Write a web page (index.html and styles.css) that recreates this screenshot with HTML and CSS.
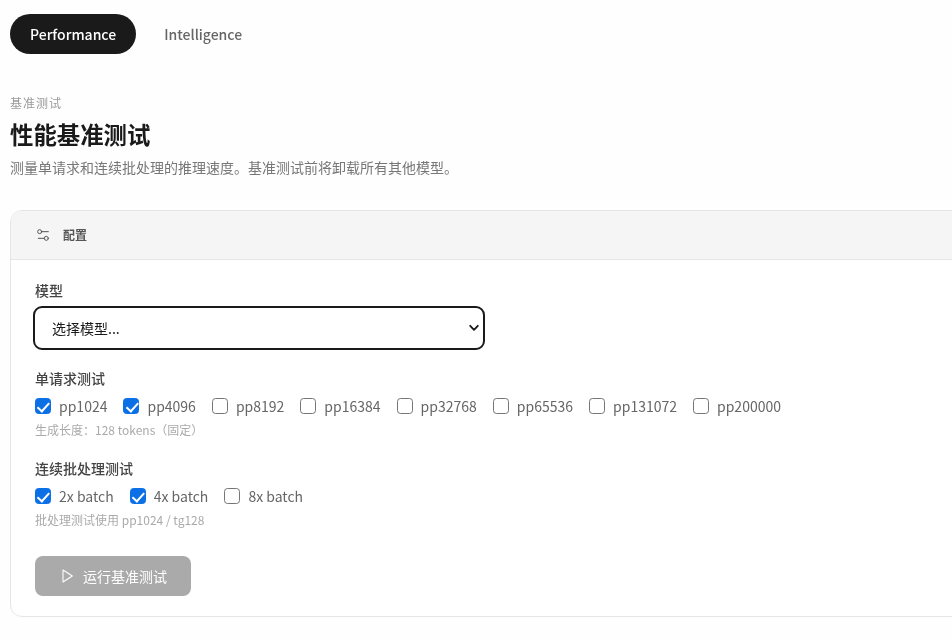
FILE: index.html
```html
<!DOCTYPE html>
<html lang="zh-CN">
<head>
<meta charset="utf-8">
<title>性能基准测试</title>
<link rel="stylesheet" href="styles.css">
</head>
<body>
<div class="page">
  <nav class="tabs">
    <button class="tab tab-active" type="button">Performance</button>
    <button class="tab" type="button">Intelligence</button>
  </nav>
  <header class="intro">
    <div class="eyebrow">基准测试</div>
    <h1 class="title">性能基准测试</h1>
    <p class="lead">测量单请求和连续批处理的推理速度。基准测试前将卸载所有其他模型。</p>
  </header>
  <section class="card">
    <div class="card-head">
      <svg class="head-icon" viewBox="0 0 24 24" fill="none" stroke="currentColor" stroke-width="1.5" stroke-linecap="round" stroke-linejoin="round">
        <path d="M20 7h-9"/>
        <path d="M14 17H5"/>
        <circle cx="17" cy="17" r="3"/>
        <circle cx="7" cy="7" r="3"/>
      </svg>
      <span>配置</span>
    </div>
    <div class="card-body">
      <div class="field field-model">
        <label class="label" for="model">模型</label>
        <div class="select-wrap">
          <select class="select" id="model">
            <option>选择模型...</option>
          </select>
          <svg class="select-arrow" viewBox="0 0 10 8" fill="none" stroke="currentColor" stroke-width="1.8" stroke-linecap="round" stroke-linejoin="round">
            <path d="M1.2 1.8 5 5.8 8.8 1.8"/>
          </svg>
        </div>
      </div>
      <div class="field field-single">
        <div class="label">单请求测试</div>
        <div class="checks">
          <label class="check"><input type="checkbox" checked><span>pp1024</span></label>
          <label class="check"><input type="checkbox" checked><span>pp4096</span></label>
          <label class="check"><input type="checkbox"><span>pp8192</span></label>
          <label class="check"><input type="checkbox"><span>pp16384</span></label>
          <label class="check"><input type="checkbox"><span>pp32768</span></label>
          <label class="check"><input type="checkbox"><span>pp65536</span></label>
          <label class="check"><input type="checkbox"><span>pp131072</span></label>
          <label class="check"><input type="checkbox"><span>pp200000</span></label>
        </div>
        <div class="hint">生成长度：128 tokens（固定）</div>
      </div>
      <div class="field field-batch">
        <div class="label">连续批处理测试</div>
        <div class="checks">
          <label class="check"><input type="checkbox" checked><span>2x batch</span></label>
          <label class="check"><input type="checkbox" checked><span>4x batch</span></label>
          <label class="check"><input type="checkbox"><span>8x batch</span></label>
        </div>
        <div class="hint">批处理测试使用 pp1024 / tg128</div>
      </div>
      <button class="run" type="button" disabled>
        <svg class="run-icon" viewBox="0 0 24 24" fill="none" stroke="currentColor" stroke-width="1.6" stroke-linecap="round" stroke-linejoin="round">
          <polygon points="6 3 20 12 6 21 6 3"/>
        </svg>
        <span>运行基准测试</span>
      </button>
    </div>
  </section>
</div>
</body>
</html>
```

FILE: styles.css
```css
* { box-sizing: border-box; }
html, body {
  margin: 0;
  height: 100%;
  overflow: hidden;
  background: #fefefe;
}
body {
  font-family: "Noto Sans CJK SC", "Noto Sans", sans-serif;
  color: #1a1a1a;
}
.page {
  width: 1010px;
  padding: 14px 0 0 10px;
  will-change: opacity;
}
.tabs {
  display: flex;
  gap: 8px;
}
.tab {
  height: 40px;
  padding: 0 20px;
  border: 0;
  border-radius: 20px;
  background: transparent;
  color: #666;
  font: 500 14px/40px "Noto Sans CJK SC", sans-serif;
}
.tab-active {
  background: #1a1a1a;
  color: #fff;
}
.intro {
  margin-top: 41px;
}
.eyebrow {
  font-size: 12px;
  line-height: 16px;
  color: #999;
  letter-spacing: 0.96px;
}
.title {
  margin: 6px 0 0;
  font-size: 23.4px;
  line-height: 34px;
  font-weight: 700;
  color: #1a1a1a;
}
.lead {
  margin: 6px 0 0;
  font-size: 14px;
  line-height: 20px;
  color: #777;
}
.card {
  margin-top: 33px;
  width: 1000px;
  height: 407px;
  border: 1px solid #e5e5e5;
  border-radius: 12px;
  overflow: hidden;
  background: #fff;
}
.card-head {
  display: flex;
  align-items: center;
  gap: 12px;
  height: 49px;
  padding: 0 24px 1px;
  background: #f5f5f5;
  border-bottom: 1px solid #e5e5e5;
  font-size: 12px;
  font-weight: 700;
  color: #555;
}
.head-icon {
  width: 16px;
  height: 16px;
  color: #555;
}
.card-body {
  padding: 20px 24px 20px;
}
.label {
  display: block;
  font-size: 14px;
  line-height: 20px;
  font-weight: 500;
  color: #444;
}
.select-wrap {
  position: relative;
  width: 452px;
  margin-top: 6px;
  margin-left: -2px;
}
.select {
  display: block;
  width: 100%;
  height: 44px;
  padding: 0 17px;
  appearance: none;
  border: 2px solid #1a1a1a;
  border-radius: 9px;
  background: #fff;
  color: #1a1a1a;
  font: 14px "Noto Sans CJK SC", sans-serif;
}
.select-arrow {
  position: absolute;
  top: 18px;
  right: 6px;
  width: 10px;
  height: 8px;
  color: #1a1a1a;
  pointer-events: none;
}
.field-single {
  margin-top: 18px;
}
.field-batch {
  margin-top: 20px;
}
.checks {
  display: flex;
  gap: 16px;
  margin-top: 6px;
  height: 24px;
  align-items: center;
}
.check {
  display: flex;
  align-items: center;
  gap: 8px;
  font-size: 14px;
  color: #666;
}
.check input {
  appearance: none;
  position: relative;
  width: 16px;
  height: 16px;
  margin: 0;
  border: 1px solid #767676;
  border-radius: 3.5px;
  background: #fff;
}
.check input:checked {
  border-color: #0b6fe6;
  background: #0b6fe6;
}
.check input:checked::after {
  content: "";
  position: absolute;
  left: 4.3px;
  top: 0.7px;
  width: 5.2px;
  height: 9.5px;
  border: solid #fff;
  border-width: 0 2.2px 2.2px 0;
  transform: rotate(42deg);
}
.hint {
  margin-top: 4px;
  font-size: 12px;
  line-height: 16px;
  color: #aaa;
}
.run {
  display: flex;
  align-items: center;
  justify-content: center;
  gap: 8px;
  width: 156px;
  height: 40px;
  margin-top: 28px;
  border: 0;
  border-radius: 8px;
  background: #aaaaaa;
  color: #fff;
  font: 400 14px "Noto Sans CJK SC", sans-serif;
}
.run-icon {
  width: 16px;
  height: 16px;
}
```
